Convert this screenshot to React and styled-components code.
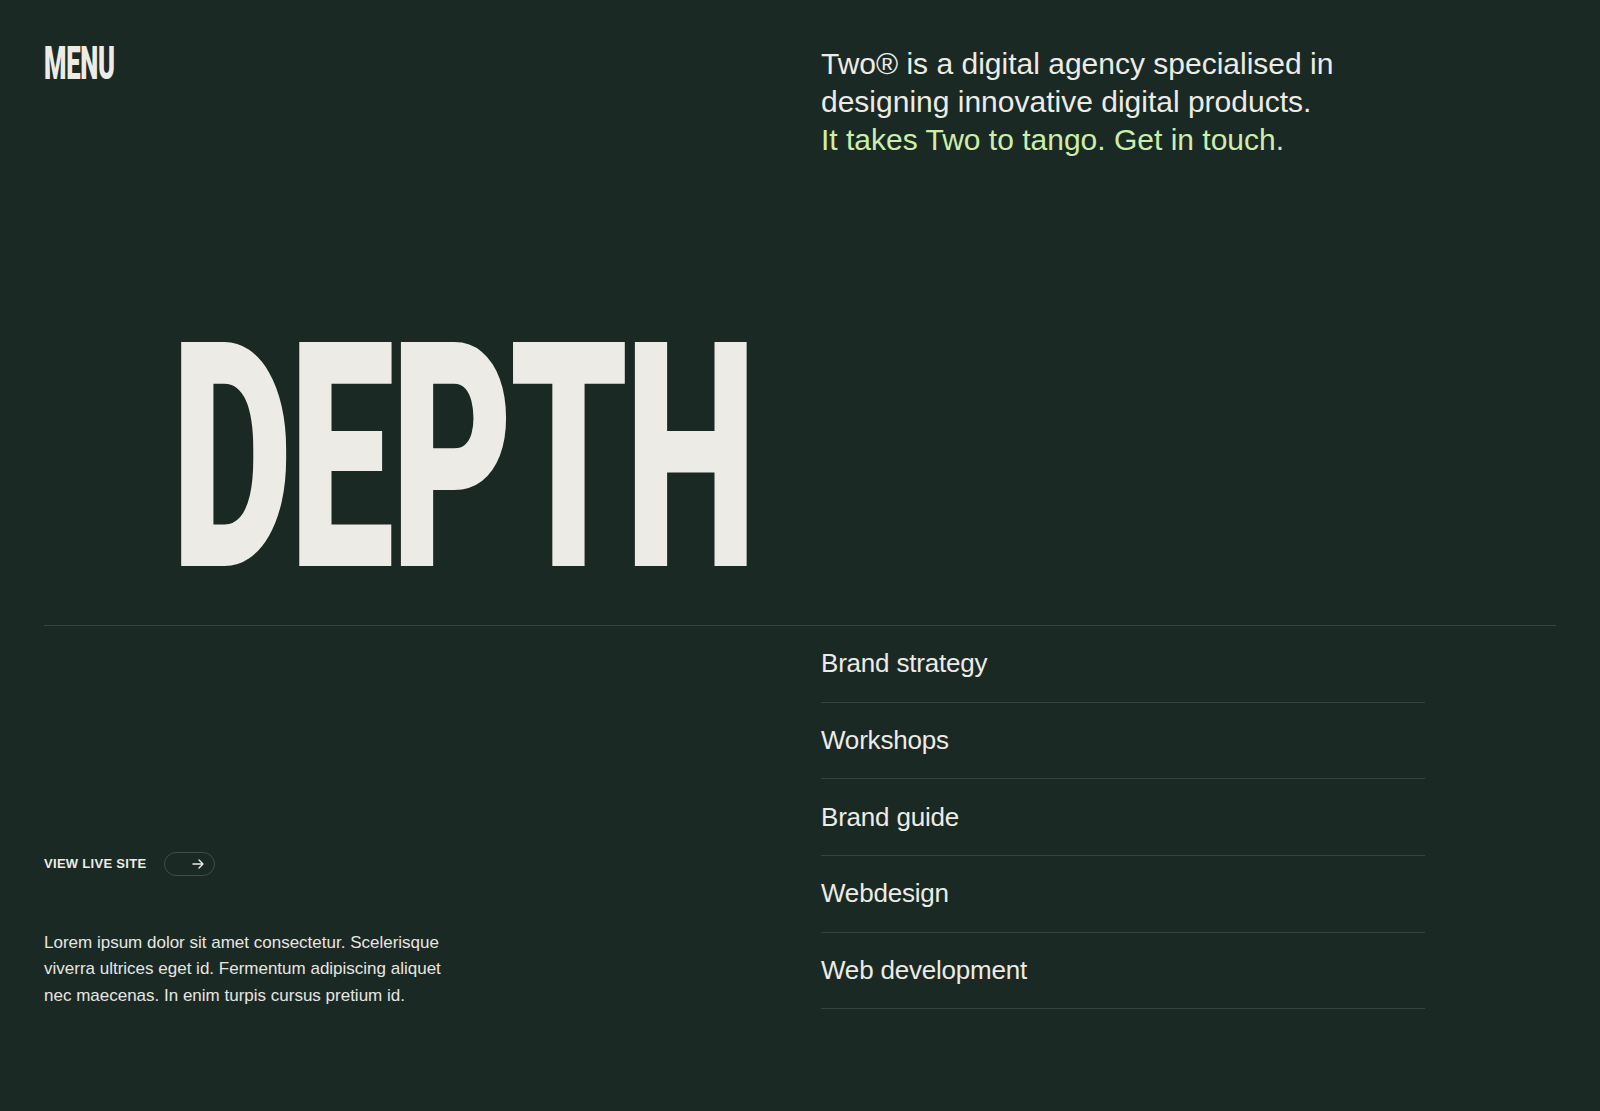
import React from 'react';
import styled, { createGlobalStyle } from 'styled-components';

const services = ['Brand strategy', 'Workshops', 'Brand guide', 'Webdesign', 'Web development'];

const GlobalStyle = createGlobalStyle`
  html, body {
    margin: 0;
    padding: 0;
    background: #1b2925;
  }
  * {
    box-sizing: border-box;
  }
`;

const Page = styled.div`
  min-height: 100vh;
  background: #1b2925;
  color: #ecebe6;
  font-family: "Liberation Sans", Arial, sans-serif;
  padding: 41px 44px 0;
`;

const TopGrid = styled.div`
  display: grid;
  grid-template-columns: 1fr 1fr;
  column-gap: 42px;
`;

const Condensed = styled.span`
  display: inline-block;
  font-family: Roboto, "Liberation Sans", sans-serif;
  font-weight: 900;
  line-height: 1;
  transform-origin: left top;
  color: #ecebe6;
`;

const Menu = styled(Condensed)`
  font-size: 47px;
  margin-top: -2px;
  transform: scaleX(0.545);
  letter-spacing: -0.5px;
`;

const Intro = styled.p`
  margin: 4px 0 0;
  max-width: 540px;
  font-size: 30px;
  line-height: 38px;
  color: #ecebe6;
`;

const Accent = styled.span`
  display: block;
  color: #cdeeaa;
`;

const Hero = styled.div`
  height: 466px;
  padding: 142px 0 0 127px;
`;

const Title = styled(Condensed)`
  font-size: 315px;
  letter-spacing: -6px;
  transform: scaleX(0.597);
`;

const Divider = styled.hr`
  margin: 0;
  border: none;
  border-top: 1px solid #35433f;
`;

const BottomGrid = styled.div`
  display: grid;
  grid-template-columns: 1fr 1fr;
  column-gap: 42px;
`;

const LeftCol = styled.div`
  display: flex;
  flex-direction: column;
  justify-content: flex-end;
  gap: 54px;
`;

const LiveRow = styled.div`
  display: flex;
  align-items: center;
  gap: 18px;
`;

const LiveLabel = styled.span`
  font-size: 13px;
  font-weight: 700;
  letter-spacing: 0.3px;
  text-transform: uppercase;
`;

const Pill = styled.a`
  display: flex;
  align-items: center;
  justify-content: flex-end;
  width: 51px;
  height: 24px;
  padding-right: 10px;
  border: 1px solid #3f4c48;
  border-radius: 12px;
  color: #ecebe6;
`;

const Body = styled.p`
  margin: 0;
  max-width: 410px;
  font-size: 17px;
  line-height: 26.5px;
  color: #e6e6e1;
`;

const List = styled.ul`
  list-style: none;
  margin: 0;
  padding: 0;
  max-width: 604px;
`;

const Item = styled.li`
  display: flex;
  align-items: center;
  height: 76.7px;
  border-bottom: 1px solid #35433f;
  font-size: 26px;
  letter-spacing: -0.2px;
  color: #ecebe6;
`;

const Arrow = () => (
  <svg width="12" height="10" viewBox="0 0 12 10" fill="none" stroke="currentColor" strokeWidth="1.4" strokeLinecap="round" strokeLinejoin="round">
    <path d="M1 5h10M7 1l4 4-4 4" />
  </svg>
);

const App = () => {
  return (
    <Page>
      <GlobalStyle />
      <TopGrid>
        <div>
          <Menu>MENU</Menu>
        </div>
        <Intro>
          Two® is a digital agency specialised in designing innovative digital products.
          <Accent>It takes Two to tango. Get in touch.</Accent>
        </Intro>
      </TopGrid>

      <Hero>
        <Title>DEPTH</Title>
      </Hero>

      <Divider />

      <BottomGrid>
        <LeftCol>
          <LiveRow>
            <LiveLabel>View live site</LiveLabel>
            <Pill href="#">
              <Arrow />
            </Pill>
          </LiveRow>
          <Body>
            Lorem ipsum dolor sit amet consectetur. Scelerisque viverra ultrices eget id.
            Fermentum adipiscing aliquet nec maecenas. In enim turpis cursus pretium id.
          </Body>
        </LeftCol>
        <List>
          {services.map(s => (
            <Item key={s}>{s}</Item>
          ))}
        </List>
      </BottomGrid>
    </Page>
  );
};

export default App;
